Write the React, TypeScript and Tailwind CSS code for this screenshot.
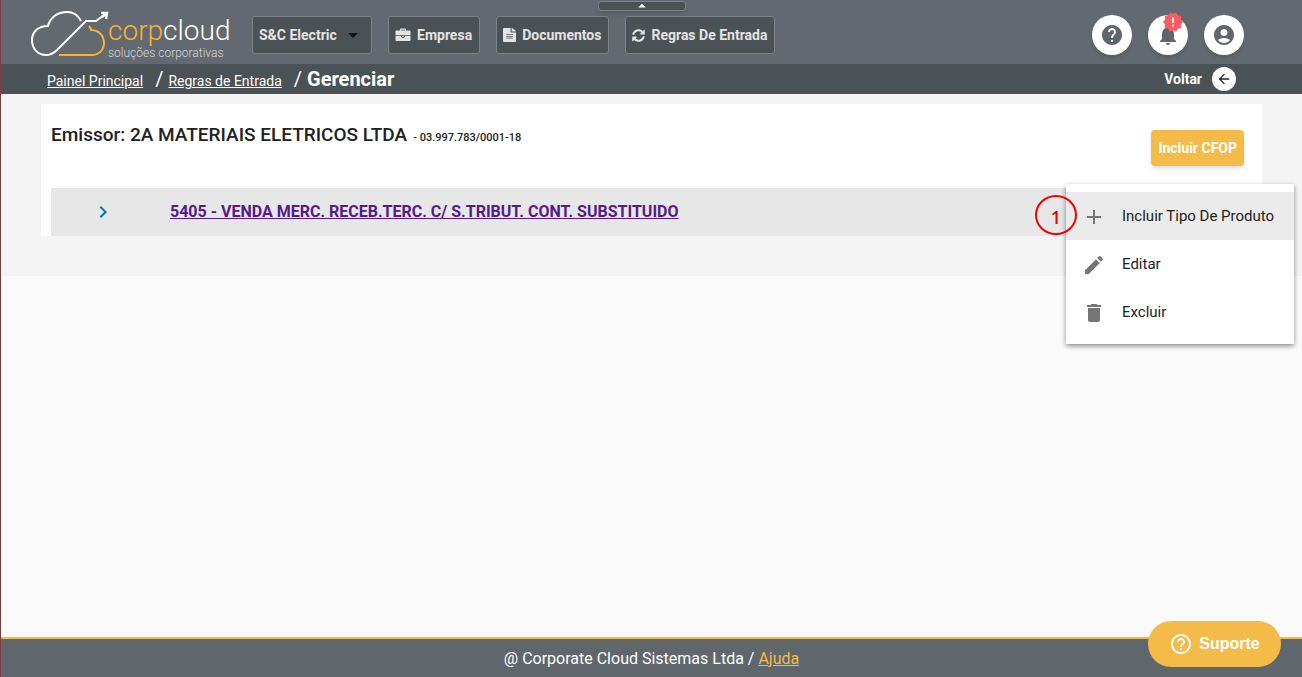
import type { ReactNode } from "react";
import {
  MdAccountCircle,
  MdAdd,
  MdArrowBack,
  MdArrowDropDown,
  MdArrowDropUp,
  MdCreate,
  MdDelete,
  MdHelp,
  MdHelpOutline,
  MdKeyboardArrowRight,
  MdNewReleases,
  MdNotifications,
} from "react-icons/md";
import { FaFileAlt, FaSyncAlt } from "react-icons/fa";

const Briefcase = () => (
  <svg width="16" height="14" viewBox="0 0 16 14" fill="currentColor">
    <path d="M5 3V1.5Q5 .5 6 .5H10Q11 .5 11 1.5V3H9.8V1.7H6.2V3Z" />
    <path d="M1.5 2.6H14.5Q15.5 2.6 15.5 3.6V7H.5V3.6Q.5 2.6 1.5 2.6Z" />
    <path d="M.5 7.8H5.8Q6 10 8 10T10.2 7.8H15.5V12Q15.5 13 14.5 13H1.5Q.5 13 .5 12Z" />
    <path d="M6.8 7.8H9.2Q9 9 8 9T6.8 7.8Z" />
  </svg>
);

const navItems = [
  { key: "empresa", label: "Empresa", icon: <Briefcase /> },
  { key: "documentos", label: "Documentos", icon: <FaFileAlt className="h-3.5 w-[13px]" preserveAspectRatio="none" /> },
  { key: "regras", label: "Regras De Entrada", icon: <FaSyncAlt size={13} /> },
];

const menuItems = [
  { key: "incluir", label: "Incluir Tipo De Produto", icon: <MdAdd size={24} /> },
  { key: "editar", label: "Editar", icon: <MdCreate size={24} /> },
  { key: "excluir", label: "Excluir", icon: <MdDelete size={24} /> },
];

const Logo = () => (
  <a href="#" aria-label="corpcloud">
    <svg width="200" height="56" viewBox="30 7 200 56" fill="none">
      <g stroke="#fff" strokeWidth="2">
        <path d="M81 21C78 15 73 12 67 12C57 12 50 18 48 26C38 26 32 32 32 40C32 49 38 55 46 55C51 55 54 53 57 50L86 21H96L104 15" />
        <path d="M101 13H107L106 19M107 13L102 17" strokeWidth="2.4" />
      </g>
      <path
        d="M59 55H92C99 55 104 50 104 43C104 35 98 30 91 30C91 28 90 27 89 26"
        stroke="#fbb034"
        strokeWidth="2"
      />
      <text x="108" y="40" fontSize="28" fontWeight="300" className="font-[Roboto]">
        <tspan fill="#fbb034">corp</tspan>
        <tspan fill="#fff">cloud</tspan>
      </text>
      <text x="108" y="57" fontSize="12" fontWeight="300" fill="#d5d8da" className="font-[Roboto]">
        soluções corporativas
      </text>
    </svg>
  </a>
);

const RoundButton = ({ label, children }: { label: string; children: ReactNode }) => (
  <button
    aria-label={label}
    className="relative flex size-10 items-center justify-center rounded-full bg-white text-[#5f676d] shadow-md"
  >
    {children}
  </button>
);

const Header = () => (
  <header>
    <div className="relative flex h-16 items-center bg-[#626970] pl-[29px] pr-[58px] pt-1.5">
      <Logo />
      <nav className="ml-[22px] flex gap-4 whitespace-nowrap text-sm font-bold text-[#e4e4e4]">
        <button className="flex h-[38px] w-[120px] items-center justify-between rounded-[3px] border border-[#7d8386] bg-[#4b5255] px-1.5">
          S&amp;C Electric
          <MdArrowDropDown size={24} className="text-[#111]" />
        </button>
        {navItems.map((item) => (
          <button
            key={item.key}
            className="flex h-[38px] items-center gap-1.5 rounded-[3px] border border-[#7d8386] bg-[#4b5255] pl-1.5 pr-[7px]"
          >
            {item.icon}
            {item.label}
          </button>
        ))}
      </nav>
      <div className="ml-auto flex gap-4">
        <RoundButton label="Ajuda">
          <MdHelp size={24} />
        </RoundButton>
        <RoundButton label="Notificações">
          <MdNotifications size={24} />
          <MdNewReleases size={22} className="absolute -top-1 right-1 text-[#ff5a5f]" />
        </RoundButton>
        <RoundButton label="Conta">
          <MdAccountCircle size={24} />
        </RoundButton>
      </div>
      <button
        aria-label="Recolher cabeçalho"
        className="absolute left-[597px] top-px flex h-2.5 w-[88px] items-center justify-center rounded-[3px] border border-[#7d8386] bg-[#4b5255] text-white shadow-md"
      >
        <MdArrowDropUp size={18} />
      </button>
    </div>

    <div className="flex h-[30px] items-center justify-between bg-[#4b5255] pl-[46px] pr-[66px] text-white">
      <nav className="flex items-baseline text-sm">
        <a href="#" className="underline">Painel Principal</a>
        <span className="ml-3 mr-[5px] text-xl">/</span>
        <a href="#" className="underline">Regras de Entrada</a>
        <span className="ml-3 mr-[5px] text-xl">/</span>
        <span className="text-xl font-bold">Gerenciar</span>
      </nav>
      <button className="flex items-center gap-2.5 text-sm font-bold">
        Voltar
        <span className="flex size-6 items-center justify-center rounded-full bg-white text-[#222]">
          <MdArrowBack size={16} />
        </span>
      </button>
    </div>
  </header>
);

const ActionMenu = () => (
  <div className="absolute left-full top-20 z-10 -ml-[196px] w-[228px] bg-white py-2 shadow-[0_2px_5px_rgba(0,0,0,0.45)]">
    {menuItems.map((item) => (
      <button
        key={item.key}
        className="flex h-12 w-full items-center gap-4 pl-4 text-[15px] text-[#212121] first:bg-[#ebebeb]"
      >
        <span className="pt-0.5 text-[#757575]">{item.icon}</span>
        {item.label}
      </button>
    ))}
    <span className="absolute -left-[31px] top-[11px] flex h-10 w-[42px] items-center justify-center rounded-[50%] border-2 border-[#f00000] pt-1 font-['Open_Sans'] text-lg font-semibold text-[#f00000]">
      1
    </span>
  </div>
);

const App = () => {
  return (
    <div className="flex min-h-screen flex-col border-l border-[#7a3d48] bg-[#fafafa] font-[Roboto,sans-serif] text-[#212121]">
      <Header />

      <main className="flex-1">
        <div className="bg-[#f4f4f4] pb-10 pl-10 pr-10 pt-2.5">
          <section className="relative bg-white pl-2.5">
            <div className="flex h-[84px] items-start justify-between pr-[18px]">
              <h1 className="pt-[17px] text-[19px] font-medium">
                Emissor: 2A MATERIAIS ELETRICOS LTDA
                <small className="ml-1.5 text-[11px] font-medium">- 03.997.783/0001-18</small>
              </h1>
              <button className="mt-[26px] h-9 rounded bg-[#f5bb48] px-[7px] text-sm font-bold text-white shadow-md">
                Incluir CFOP
              </button>
            </div>
            <div className="flex h-12 items-center bg-[#e7e7e7]">
              <button aria-label="Expandir" className="ml-10 text-[#0277a8]">
                <MdKeyboardArrowRight size={24} />
              </button>
              <a href="#" className="ml-[55px] font-bold text-[#551a8b] underline">
                5405 - VENDA MERC. RECEB.TERC. C/ S.TRIBUT. CONT. SUBSTITUIDO
              </a>
            </div>
            <ActionMenu />
          </section>
        </div>
      </main>

      <footer className="flex h-10 items-center justify-center border-t-2 border-[#f5bb48] bg-[#5f676d] pt-0.5 text-base text-white">
        <p>
          @ Corporate Cloud Sistemas Ltda /{" "}
          <a href="#" className="text-[#f5bb48] underline">Ajuda</a>
        </p>
      </footer>

      <button className="fixed bottom-2.5 right-[21px] flex h-[46px] w-[133px] items-center justify-center gap-1.5 rounded-full bg-[#f5bb48] font-['Liberation_Sans',sans-serif] text-base font-bold text-white">
        <MdHelpOutline size={24} />
        Suporte
      </button>
    </div>
  );
};

export default App;
